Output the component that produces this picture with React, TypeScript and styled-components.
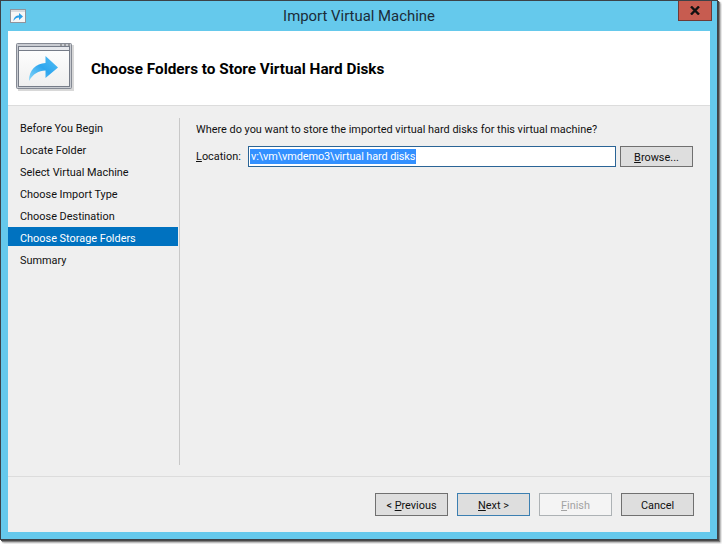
import { FC } from 'react';
import styled, { createGlobalStyle, css } from 'styled-components';

const GlobalStyle = createGlobalStyle`
  html, body {
    margin: 0;
    padding: 0;
    height: 544px;
    background: #fff;
    overflow: hidden;
  }
  * {
    box-sizing: border-box;
  }
`;

const StyledWindow = styled.div`
  width: 718px;
  height: 540px;
  display: flex;
  flex-direction: column;
  background: #65c9ec;
  border: 1px solid #3c4248;
  box-shadow: 1px 1px 0 #4a4a4a, 2px 2px 1px #808080, 3px 3px 2px #b4b4b4;
  font-family: 'Roboto', sans-serif;
  color: #111;
`;

const StyledTitleBar = styled.div`
  height: 30px;
  flex: none;
  display: grid;
  grid-template-columns: 1fr auto 1fr;
  align-items: start;
`;

const StyledAppIcon = styled.div`
  padding: 8px 0 0 9px;
  line-height: 0;
`;

const StyledTitle = styled.div`
  font-size: 14.9px;
  line-height: 30px;
  color: #1b2c38;
`;

const StyledClose = styled.div`
  justify-self: end;
  width: 34px;
  height: 20px;
  margin-right: 5px;
  background: #c75c50;
  border: 1px solid #6e3a36;
  border-top: none;
  display: flex;
  align-items: center;
  justify-content: center;
  line-height: 0;
`;

const StyledClient = styled.div`
  flex: 1;
  margin: 0 7px 7px;
  display: flex;
  flex-direction: column;
  background: #efefef;
`;

const StyledHeader = styled.div`
  height: 75px;
  flex: none;
  display: flex;
  align-items: center;
  gap: 17px;
  padding: 0 0 2px 8px;
  background: #fff;
  border-bottom: 1px solid #dcdcdc;
`;

const StyledHeading = styled.h1`
  margin: 4px 0 0;
  font-size: 15.3px;
  font-weight: 700;
  color: #000;
`;

const StyledBody = styled.div`
  flex: 1;
  display: flex;
  border-bottom: 1px solid #dcdcdc;
`;

const StyledSidebar = styled.div`
  width: 170px;
  flex: none;
  padding-top: 11px;
`;

const StyledStep = styled.div<{ $active?: boolean }>`
  height: 19px;
  margin-bottom: 3px;
  padding-left: 12px;
  font-size: 10.9px;
  line-height: 23px;
  white-space: nowrap;
  ${(p) =>
    p.$active &&
    css`
      background: #0072c0;
      color: #fff;
    `}
`;

const StyledDivider = styled.div`
  width: 1px;
  flex: none;
  margin: 12px 0 11px 1px;
  background: #c8c8c8;
`;

const StyledContent = styled.div`
  flex: 1;
  padding: 15px 17px 0 16px;
`;

const StyledPrompt = styled.div`
  font-size: 10.9px;
  line-height: 18px;
  margin-bottom: 7px;
  white-space: nowrap;
`;

const StyledLocationRow = styled.div`
  display: flex;
  align-items: flex-start;
`;

const StyledLabel = styled.div`
  width: 52px;
  flex: none;
  font-size: 10.9px;
  line-height: 22px;
`;

const StyledInput = styled.div`
  width: 368px;
  height: 21px;
  flex: none;
  padding: 2px 0 0 1px;
  margin-right: 4px;
  background: #fff;
  border: 1px solid #2a6496;
  font-size: 10.9px;
`;

const StyledSelection = styled.span`
  display: inline-block;
  height: 15px;
  line-height: 15px;
  padding: 0 1px 0 1px;
  background: #3390ff;
  color: #fff;
  letter-spacing: -0.1px;
  white-space: nowrap;
`;

const StyledButton = styled.div<{ $state?: 'focus' | 'disabled' }>`
  width: 73px;
  height: 23px;
  flex: none;
  display: flex;
  align-items: center;
  justify-content: center;
  padding-top: 2px;
  background: #dedede;
  border: 1px solid #707070;
  font-size: 10.9px;
  white-space: pre;
  ${(p) =>
    p.$state === 'focus' &&
    css`
      border-color: #3c7fb1;
    `}
  ${(p) =>
    p.$state === 'disabled' &&
    css`
      background: #f4f4f4;
      border-color: #adb2b5;
      color: #a3a3a3;
    `}
`;

const StyledBrowseButton = styled(StyledButton)`
  height: 21px;
`;

const StyledFooter = styled.div`
  height: 55px;
  flex: none;
  display: flex;
  justify-content: flex-end;
  gap: 9px;
  padding: 16px 16px 0 0;
`;

const WindowIcon: FC = () => (
  <svg width="58" height="48" viewBox="0 0 58 48">
    <defs>
      <linearGradient id="paneFill" x1="0" y1="0" x2="0" y2="1">
        <stop offset="0" stopColor="#ffffff" />
        <stop offset="1" stopColor="#efefef" />
      </linearGradient>
      <linearGradient id="arrowFill" x1="0" y1="1" x2="1" y2="0">
        <stop offset="0" stopColor="#8ad8fa" />
        <stop offset="0.5" stopColor="#2ea6ee" />
        <stop offset="1" stopColor="#55c0f6" />
      </linearGradient>
    </defs>
    <rect x="2" y="2" width="56" height="46" fill="#d8d8d8" />
    <rect x="0.5" y="0.5" width="55" height="45" rx="1" fill="#c9ccd2" stroke="#858a94" />
    <rect x="2.5" y="3.5" width="51" height="40" fill="url(#paneFill)" stroke="#767c88" />
    <rect x="2.5" y="3.5" width="51" height="4" fill="#e6e8ec" stroke="#767c88" />
    <rect x="44" y="1.5" width="2" height="1" fill="#666" />
    <rect x="48" y="1.5" width="2" height="1" fill="#666" />
    <rect x="52" y="1.5" width="2" height="1" fill="#666" />
    <path
      d="M13 38 C13 27 20 20.5 29.5 20 L29.5 13 L42 24.5 L29.5 35 L29.5 27.5 C22.5 27.5 17 31 13 38 Z"
      fill="url(#arrowFill)"
    />
  </svg>
);

const SmallIcon: FC = () => (
  <svg width="16" height="14" viewBox="0 0 16 14">
    <rect x="0.5" y="0.5" width="15" height="13" fill="#f6f6f6" stroke="#8f949c" />
    <rect x="1" y="1" width="14" height="2" fill="#d8dade" />
    <path d="M3.5 12 C3.5 8.5 6 6.5 9 6.5 L9 4 L13 7.5 L9 11 L9 8.5 C7 8.5 5 9.5 3.5 12 Z" fill="#2b9fe8" />
  </svg>
);

const CloseGlyph: FC = () => (
  <svg width="10" height="9" viewBox="0 0 10 9">
    <path d="M1 0.5 L9 8.5 M9 0.5 L1 8.5" stroke="#111" strokeWidth="2.4" />
  </svg>
);

const steps = [
  'Before You Begin',
  'Locate Folder',
  'Select Virtual Machine',
  'Choose Import Type',
  'Choose Destination',
  'Choose Storage Folders',
  'Summary',
];

const App: FC = () => {
  return (
    <>
      <GlobalStyle />
      <StyledWindow>
        <StyledTitleBar>
          <StyledAppIcon>
            <SmallIcon />
          </StyledAppIcon>
          <StyledTitle>Import Virtual Machine</StyledTitle>
          <StyledClose>
            <CloseGlyph />
          </StyledClose>
        </StyledTitleBar>
        <StyledClient>
          <StyledHeader>
            <WindowIcon />
            <StyledHeading>Choose Folders to Store Virtual Hard Disks</StyledHeading>
          </StyledHeader>
          <StyledBody>
            <StyledSidebar>
              {steps.map((step) => (
                <StyledStep key={step} $active={step === 'Choose Storage Folders'}>
                  {step}
                </StyledStep>
              ))}
            </StyledSidebar>
            <StyledDivider />
            <StyledContent>
              <StyledPrompt>
                Where do you want to store the imported virtual hard disks for this virtual machine?
              </StyledPrompt>
              <StyledLocationRow>
                <StyledLabel>
                  <u>L</u>ocation:
                </StyledLabel>
                <StyledInput>
                  <StyledSelection>v:\vm\vmdemo3\virtual hard disks</StyledSelection>
                </StyledInput>
                <StyledBrowseButton>
                  <span>
                    <u>B</u>rowse...
                  </span>
                </StyledBrowseButton>
              </StyledLocationRow>
            </StyledContent>
          </StyledBody>
          <StyledFooter>
            <StyledButton>
              <span>
                {'< '}
                <u>P</u>revious
              </span>
            </StyledButton>
            <StyledButton $state="focus">
              <span>
                <u>N</u>ext {'>'}
              </span>
            </StyledButton>
            <StyledButton $state="disabled">
              <span>
                <u>F</u>inish
              </span>
            </StyledButton>
            <StyledButton>Cancel</StyledButton>
          </StyledFooter>
        </StyledClient>
      </StyledWindow>
    </>
  );
};

export default App;
